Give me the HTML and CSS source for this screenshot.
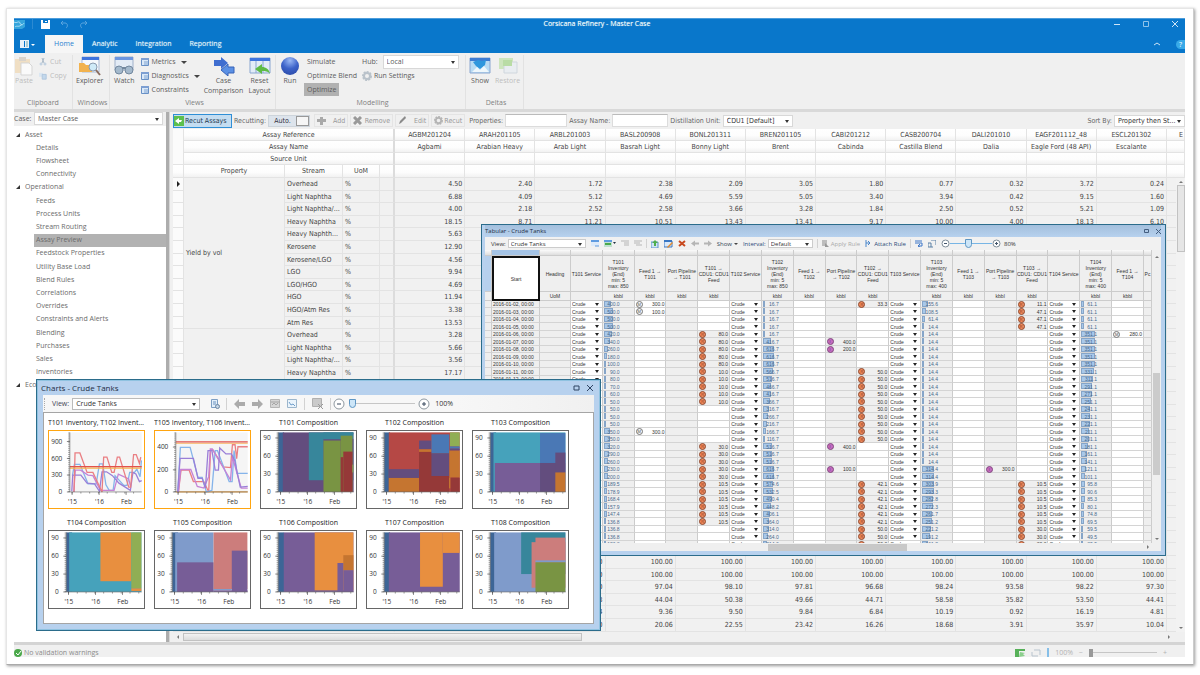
FILE: index.html
```html
<!DOCTYPE html>
<html lang="en">
<head>
<meta charset="utf-8">
<title>Corsicana Refinery - Master Case</title>
<link rel="stylesheet" href="styles.css">
</head>
<body>
<div class="frame">
<div class="app">

<header class="header">
  <div class="titlebar">
    <svg class="logo" width="12" height="9" viewBox="0 0 12 9"><path d="M0 0h11v7L8 9H0z" fill="#35a5dc"/><path d="M0 2c3 2 5-2 6 1s3 2 4 0M1 7c2-2 4 1 7-3" stroke="#a9def5" fill="none"/></svg>
    <span class="sep"></span>
    <button class="qbtn" aria-label="Save"><svg width="9" height="9" viewBox="0 0 9 9"><path d="M0 0h9v9H0z" fill="#fff"/><path d="M2 0h5v3H2z" fill="#0977cb"/><path d="M4 1h2v1H4z" fill="#fff"/></svg></button>
    <button class="qbtn" aria-label="Undo"><svg width="9" height="9" viewBox="0 0 9 9"><path d="M3 1 1 3l2 2M1 3h4c3 0 3 4 1 5" stroke="#5aa5df" fill="none"/></svg></button>
    <button class="qbtn" aria-label="Redo"><svg width="9" height="9" viewBox="0 0 9 9"><path d="m6 1 2 2-2 2M8 3H4C1 3 1 7 3 8" stroke="#5aa5df" fill="none"/></svg></button>
    <h1 class="title">Corsicana Refinery - Master Case</h1>
    <div class="wincontrols">
      <button class="qbtn" aria-label="Minimize"><svg width="8" height="8"><path d="M1 4.5h6" stroke="#cfe5f6"/></svg></button>
      <button class="qbtn" aria-label="Maximize"><svg width="8" height="8"><path d="M1.500 1.500h5v5h-5z" stroke="#8fc3ea" fill="none"/></svg></button>
      <button class="qbtn" aria-label="Close"><svg width="8" height="8"><path d="m1 1 6 6M7 1 1 7" stroke="#cfe5f6"/></svg></button>
    </div>
  </div>
  <nav class="tabs">
    <button class="filemenu" aria-label="File"><svg width="16" height="8" viewBox="0 0 16 8"><path d="M0 0h9v8H0z" fill="#e9f2fa"/><path d="M4.500 1v6" stroke="#0977cb"/><path d="M6 2h2M6 4h2M6 6h2" stroke="#7aa" /><path d="m11 4 2 2 2-2z" fill="#fff"/></svg></button>
    <button class="tab active">Home</button>
    <button class="tab">Analytic</button>
    <button class="tab">Integration</button>
    <button class="tab">Reporting</button>
    <div class="tabright">
      <svg width="8" height="6"><path d="m1 4 3-2 3 2" stroke="#cfe5f6" fill="none"/></svg>
      <button class="help">?</button>
    </div>
  </nav>
</header>

<section class="ribbon">
  <div class="group g-clip">
    <div class="gbody">
      <button class="big dim"><svg width="20" height="20" viewBox="0 0 20 20"><path d="M1 3h15v14H1z" fill="#f0dfc4"/><path d="M5 1h7v4H5z" fill="#d9d3cb"/><path d="M7 7h8l3 3v9H7z" fill="#fafafa" stroke="#d5d5d5"/></svg>Paste</button>
      <div class="stack">
        <button class="small dim"><svg width="8" height="8" viewBox="0 0 8 8"><path d="M3 0 5 5M5 0 3 5" stroke="#a9b8c6"/><circle cx="2" cy="6" r="1" fill="none" stroke="#b5c8dc"/><circle cx="6" cy="6" r="1" fill="none" stroke="#b5c8dc"/></svg>Cut</button>
        <button class="small dim"><svg width="8" height="8" viewBox="0 0 10 8"><path d="M0 0h5v5H0z" fill="#dbe7f2"/><path d="M4 2h5v6H4z" fill="#c3d8ec" stroke="#a8c2db"/></svg>Copy</button>
      </div>
    </div>
    <div class="glabel">Clipboard</div>
  </div>
  <div class="group g-win">
    <div class="gbody">
      <button class="big"><svg width="22" height="20" viewBox="0 0 22 20"><path d="M3 1h17v15H3z" fill="#f5f8fc" stroke="#a9b9d4"/><path d="M3 1h17v3H3z" fill="#3f74dd"/><path d="M0 7h5l2 2h6v7H0z" fill="#f2b24e"/><circle cx="14" cy="11" r="4" fill="#cfeaf8" stroke="#8b9bb0"/><path d="m17 14 4 5" stroke="#8b6d60" stroke-width="2"/></svg>Explorer</button>
    </div>
    <div class="glabel">Windows</div>
  </div>
  <div class="group g-views">
    <div class="gbody">
      <button class="big"><svg width="20" height="20" viewBox="0 0 20 20"><path d="M1 1h18v13H1z" fill="#e3ebf5" stroke="#9fb0c9"/><path d="M1 1h18v3H1z" fill="#6d96df"/><circle cx="5" cy="14" r="4" fill="#a4b9cc" stroke="#73889e"/><circle cx="15" cy="14" r="4" fill="#a4b9cc" stroke="#73889e"/><path d="M8 12h4" stroke="#73889e" stroke-width="2"/></svg>Watch</button>
      <div class="stack">
        <button class="small"><svg width="8" height="8" viewBox="0 0 8 8"><path d="M.500.500h7v7h-7z" fill="#dbe9f8" stroke="#6890c6"/><path d="M0 0h8v2H0z" fill="#7d9fd2"/><path d="M3 4h4M3 6h4" stroke="#7fa3d1"/></svg>Metrics <i class="caret"></i></button>
        <button class="small"><svg width="8" height="8" viewBox="0 0 8 8"><path d="M.500.500h7v7h-7z" fill="#dbe9f8" stroke="#6890c6"/><path d="M0 0h8v2H0z" fill="#7d9fd2"/><path d="M3 4h4M3 6h4" stroke="#7fa3d1"/></svg>Diagnostics <i class="caret"></i></button>
        <button class="small"><svg width="8" height="8" viewBox="0 0 8 8"><path d="M.500.500h7v7h-7z" fill="#dbe9f8" stroke="#6890c6"/><path d="M0 0h8v2H0z" fill="#7d9fd2"/><path d="M3 4h4M3 6h4" stroke="#7fa3d1"/></svg>Constraints</button>
      </div>
      <button class="big compare"><svg width="22" height="20" viewBox="0 0 22 20"><path d="M1 4h7V1l7 6-7 6v-3H1z" fill="#3f6ed0"/><path d="M21 11h-6V8l-7 6 7 6v-3h6z" fill="#5b90e4" stroke="#3763b8"/></svg>Case<br>Comparison</button>
      <button class="big"><svg width="22" height="20" viewBox="0 0 22 20"><path d="M1 2h20v15H1z" fill="#e2ecf8" stroke="#8aa6d0"/><path d="M1 2h20v3H1z" fill="#3f74dd"/><path d="M7 5v12M14 5v12" stroke="#8aa6d0"/><path d="m6 13 7-5v3c4 0 7 2 8 7-2-3-5-3-8-3v3z" fill="#5dbb46"/></svg>Reset<br>Layout</button>
    </div>
    <div class="glabel">Views</div>
  </div>
  <div class="group g-model">
    <div class="gbody">
      <button class="big"><svg width="20" height="20" viewBox="0 0 20 20"><defs><radialGradient id="ball" cx=".5" cy=".2" r=".9"><stop offset="0" stop-color="#9ab8f4"/><stop offset=".5" stop-color="#3d63c9"/><stop offset="1" stop-color="#2a48a4"/></radialGradient></defs><circle cx="10" cy="10" r="9" fill="url(#ball)"/></svg>Run</button>
      <div class="stack modes">
        <button class="small">Simulate</button>
        <button class="small">Optimize Blend</button>
        <button class="small pressed">Optimize</button>
      </div>
      <div class="stack hubs">
        <div class="small"><label for="hub">Hub:</label><span class="select hub"><select id="hub"><option>Local</option></select></span></div>
        <button class="small"><svg width="10" height="10" viewBox="0 0 10 10"><circle cx="5" cy="5" r="3" fill="none" stroke="#b9c2ca" stroke-width="2"/><circle cx="5" cy="5" r="4" fill="none" stroke="#b9c2ca" stroke-width="2" stroke-dasharray="2 1"/></svg>Run Settings</button>
      </div>
    </div>
    <div class="glabel">Modelling</div>
  </div>
  <div class="group g-delta">
    <div class="gbody">
      <button class="big"><svg width="22" height="20" viewBox="0 0 22 20"><path d="M1 2h20v15H1z" fill="#b9dcf4" stroke="#8aa6d0"/><path d="M1 2h20v3H1z" fill="#3e7cd2"/><path d="M4 6 9 4l4 1 4-1-1 5-5 4-4-3z" fill="#2f97dd"/><path d="m3 16 5-5 3 3 4-4 5 6z" fill="#eef7fc"/></svg>Show</button>
      <button class="big dim"><svg width="22" height="20" viewBox="0 0 22 20"><path d="M2 2h14v11H2z" fill="#cde5bd"/><path d="M7 6h13v11H7z" fill="#e9edf1" stroke="#cfd6dd"/><path d="M6 4h9v6H6z" fill="#b9dca5"/></svg>Restore</button>
    </div>
    <div class="glabel">Deltas</div>
  </div>
</section>

<div class="workspace">
  <aside class="sidebar">
    <div class="caserow"><label for="case">Case:</label><span class="select"><select id="case"><option>Master Case</option></select></span></div>
    <ul class="tree" id="tree"></ul>
  </aside>
  <div class="splitter"></div>
  <main class="main">
    <div class="toolbar">
      <button class="recut"><svg width="10" height="10" viewBox="0 0 10 10"><path d="M0 0h10v10H0z" fill="#5dc04e"/><path d="m1 5 4-3v2h3l-1 2H5v2z" fill="#fff"/></svg>Recut Assays</button>
      <span>Recutting:</span>
      <button class="auto">Auto.<i class="knob"></i></button>
      <button class="tbtn"><svg width="10" height="10" viewBox="0 0 10 10"><path d="M3 1h3v2h3v3H6v3H3V6H0V3h3z" fill="#a9a9a9"/></svg>Add</button>
      <button class="tbtn remove"><svg width="9" height="9" viewBox="0 0 9 9"><path d="m1 1 7 7M8 1 1 8" stroke="#999" stroke-width="3"/></svg>Remove</button>
      <button class="tbtn"><svg width="9" height="9" viewBox="0 0 9 9"><path d="m1 8 1-3 5-5 1 2-5 5z" fill="#8b8b8b"/></svg>Edit</button>
      <button class="tbtn"><svg width="9" height="9" viewBox="0 0 10 10"><circle cx="5" cy="5" r="3" fill="none" stroke="#b5b5b5" stroke-width="2"/><circle cx="5" cy="5" r="4" fill="none" stroke="#b5b5b5" stroke-width="2" stroke-dasharray="2 1"/></svg>Recut</button>
      <label for="props">Properties:</label><input class="props" id="props" type="text">
      <label for="aname">Assay Name:</label><input class="aname" id="aname" type="text">
      <label for="dist">Distillation Unit:</label><span class="select boxed dist"><select id="dist"><option>CDU1 [Default]</option></select></span>
      <label class="sortlabel" for="sort">Sort By:</label><span class="select boxed sort"><select id="sort"><option>Property then St...</option></select></span>
    </div>
    <div class="gridwrap">
      <table class="assays" id="assays"></table>
      <div class="vscroll"><i class="up"></i><i class="thumb"></i><i class="down"></i></div>
    </div>
    <div class="hscroll"><i class="left"></i><i class="thumb"></i><i class="right"></i></div>
  </main>
</div>

<footer class="status">
  <svg width="8" height="8" viewBox="0 0 8 8"><circle cx="4" cy="4" r="4" fill="#4aa84a"/><path d="m2 4 2 2 3-4" stroke="#fff" fill="none"/></svg>
  <span>No validation warnings</span>
  <div class="zoom">
    <svg width="10" height="8" viewBox="0 0 10 8"><path d="M0 0h10v2H4v6H0z" fill="#57b159"/><path d="m4 8 1-5 5 1-2 1 2 2z" fill="#8ccf8d"/></svg>
    <svg width="10" height="8" viewBox="0 0 10 8"><path d="M3 1h6v5M7 7H1V3" stroke="#b8c4ce" fill="none"/></svg>
    <i class="bar"></i><span>100%</span><span>−</span><input type="range" min="0" max="100" value="0" aria-label="Zoom"><span>+</span>
  </div>
</footer>

<section class="window tabular">
  <h2 class="wtitle">Tabular - Crude Tanks<span class="wbtns"><button aria-label="Maximize"><svg width="5" height="5"><path d="M.500.500h4v3h-4z" fill="none" stroke="#445e80"/></svg></button><button aria-label="Close"><svg width="5" height="5"><path d="m0 0 5 5M5 0 0 5" stroke="#445e80"/></svg></button></span></h2>
  <div class="wbar">
    <label for="tview">View:</label><span class="select boxed tview"><select id="tview"><option>Crude Tanks</option></select></span>
    <svg width="8" height="7" viewBox="0 0 8 7"><path d="M0 1h8v5H0z" fill="#dceafa"/><path d="M0 0h8v2H0z" fill="#5f9be0"/><path d="M4 6h4" stroke="#5f9be0"/></svg>
    <svg width="12" height="7" viewBox="0 0 12 7"><path d="M0 0h8v7H0z" fill="#bfe0d0"/><path d="M0 0h8v2H0z" fill="#5f9be0"/><path d="M1 4h6" stroke="#49a84c" stroke-width="2"/><path d="m9 2 3 0-1.500 2z" fill="#234"/></svg>
    <svg width="8" height="7" viewBox="0 0 8 7"><path d="M0 1h8M3 3h5M3 5h5" stroke="#b5b5b5"/></svg>
    <svg width="8" height="7" viewBox="0 0 8 7"><path d="M0 1h8M0 3h6M2 5h6" stroke="#b5b5b5"/></svg>
    <i class="vsep"></i>
    <svg width="8" height="8" viewBox="0 0 8 8"><path d="M0 2h7v6H0z" fill="#cfe3f6" stroke="#5d93cc"/><path d="m4 0 3 3H5v3H3V3H1z" fill="#4fae4d"/></svg>
    <svg width="9" height="8" viewBox="0 0 9 8"><path d="M0 1h8v6H0z" fill="#d9e8fa" stroke="#3876c4"/><path d="M0 0h8v2H0z" fill="#3876c4"/><path d="m3 7 5-5 1 1-5 5z" fill="#e28b2e"/></svg>
    <svg width="8" height="7" viewBox="0 0 8 7"><path d="m1 1 6 5M7 1 1 6" stroke="#c84a20" stroke-width="2"/></svg>
    <svg width="8" height="7" viewBox="0 0 8 7"><path d="m0 3.500 4-3v2h4v2H4v2z" fill="#b5b5b5"/></svg>
    <svg width="8" height="7" viewBox="0 0 8 7"><path d="m8 3.500-4-3v2H0v2h4v2z" fill="#b5b5b5"/></svg>
    <button class="link">Show <i class="caret"></i></button>
    <label class="navy" for="interval">Interval:</label><span class="select boxed tint"><select id="interval"><option>Default</option></select></span>
    <i class="vsep"></i>
    <button class="link dim"><svg width="7" height="7" viewBox="0 0 7 7"><path d="M0 0h5v6H0z" fill="#bdbdbd"/><path d="m3 3 4 4H3z" fill="#999"/></svg>Apply Rule</button>
    <button class="link navy"><svg width="7" height="7" viewBox="0 0 7 7"><path d="M1 0v7M1 3h4M3 1l2 2-2 2" stroke="#4b87cb" fill="none"/></svg>Attach Rule</button>
    <i class="vsep"></i>
    <svg width="8" height="7" viewBox="0 0 8 7"><path d="M0 1h7M0 3h7v3H3m2-2L3 6l2 1" stroke="#3c76c8" fill="none"/></svg>
    <svg width="8" height="8" viewBox="0 0 8 8"><path d="M3 0h5v5M5 7H0V3h3v4" stroke="#5b80a5" fill="none"/></svg>
    <span class="zslider"><svg width="9" height="9" viewBox="0 0 9 9"><circle cx="4.500" cy="4.500" r="3.500" fill="#fff" stroke="#7e8c98"/><path d="M3 4.500h3" stroke="#44566b"/></svg><input type="range" min="0" max="100" value="42" aria-label="Table zoom"><svg width="9" height="9" viewBox="0 0 9 9"><circle cx="4.500" cy="4.500" r="3.500" fill="#fff" stroke="#7e8c98"/><path d="M3 4.500h3M4.500 3v3" stroke="#44566b"/></svg><span>80%</span></span>
  </div>
  <div class="tbody">
    <div class="tclip"><table class="tanks" id="tanks"></table></div>
    <div class="tvscroll"><i class="up"></i><i class="thumb"></i><i class="down"></i></div>
    <div class="thscroll"><i class="thumb"></i><i class="right"></i></div>
  </div>
</section>

<section class="window charts">
  <h2 class="wtitle">Charts - Crude Tanks<span class="wbtns"><button aria-label="Maximize"><svg width="7" height="6"><path d="M1 1h5v4H1z" fill="none" stroke="#2f4463"/></svg></button><button aria-label="Close"><svg width="6" height="6"><path d="m0 0 6 6M6 0 0 6" stroke="#2f4463"/></svg></button></span></h2>
  <div class="wbar">
    <i class="grip"></i>
    <label for="cview">View:</label><span class="select boxed cview"><select id="cview"><option>Crude Tanks</option></select></span>
    <svg width="10" height="10" viewBox="0 0 10 10"><path d="M1.500.500h6v8h-6z" fill="#e3effa" stroke="#7d9fc4"/><path d="M3 3h3M3 5h3" stroke="#6b92bf"/><circle cx="7.500" cy="7.500" r="2" fill="#c5d6e6" stroke="#6c86a2"/></svg>
    <i class="vsep"></i>
    <svg width="12" height="10" viewBox="0 0 12 10"><path d="m0 5 5-5v3h6v4H5v3z" fill="#ababab"/></svg>
    <svg width="12" height="10" viewBox="0 0 12 10"><path d="m11 5-5-5v3H0v4h6v3z" fill="#ababab"/></svg>
    <svg width="11" height="10" viewBox="0 0 11 10"><path d="M.500.500h9v8h-9z" fill="#d5d5d5" stroke="#b5b5b5"/><path d="M1 3h9M2 6l2-2 2 2 2-2" stroke="#a5a5a5" fill="none"/></svg>
    <svg width="11" height="10" viewBox="0 0 11 10"><path d="M.500.500h9v8h-9z" fill="#eaf4fc" stroke="#9cb6cc"/><path d="m2 3 2 3 2-1 2 2" stroke="#6f9dca" fill="none"/></svg>
    <i class="vsep"></i>
    <svg width="12" height="11" viewBox="0 0 12 11"><path d="M.500.500h9v8h-9z" fill="#cacaca" stroke="#b0b0b0"/><path d="m6 6 5 5M11 6l-5 5" stroke="#999"/></svg>
    <i class="vsep"></i>
    <span class="zslider"><svg width="12" height="12" viewBox="0 0 12 12"><circle cx="6" cy="6" r="5" fill="#fff" stroke="#8d979f"/><path d="M4 6h4" stroke="#39495c"/></svg><input type="range" min="0" max="100" value="0" aria-label="Chart zoom"><svg width="12" height="12" viewBox="0 0 12 12"><circle cx="6" cy="6" r="5" fill="#fff" stroke="#8d979f"/><path d="M4 6h4M6 4v4" stroke="#39495c"/></svg><span>100%</span></span>
  </div>
  <div class="chartgrid" id="chartgrid"></div>
</section>

</div>
</div>
<script src="script.js"></script>
</body>
</html>
```
FILE: styles.css
```css
* { box-sizing: border-box; }
body { margin: 0; background: #fff; font: 7px/10px "Open Sans", "Noto Sans", sans-serif; color: #5c5c5c; overflow: hidden; }
button, input, select { font: inherit; color: inherit; margin: 0; padding: 0; border: 0; background: none; }
button { white-space: nowrap; }
svg { display: block; flex: none; }
h1, h2, ul { margin: 0; padding: 0; font-weight: normal; list-style: none; }
i { display: block; flex: none; }

.frame { height: calc(100vh - 18px); margin: 8px 6px 10px; padding: 9px 8px 7px 7px; border: 1px solid #e6e6e6; border-bottom-color: #aaa; border-right-color: #ccc; box-shadow: 1px 1px 3px #999; }
.app { position: relative; height: 100%; display: flex; flex-direction: column; background: #f0f0f0; }

.header { background: #0977cb; color: #fff; border-top: 1px solid #4d9ddb; }
.titlebar { position: relative; display: flex; align-items: center; height: 10px; }
.logo { margin-right: 6px; }
.sep { width: 1px; height: 10px; background: #2c8ad2; margin-right: 8px; }
.titlebar > .qbtn { margin-right: 10px; }
.title { position: absolute; left: 50%; top: 0; margin-left: -56px; font-size: 7px; line-height: 10px; text-shadow: 0 0 1px #9cd; white-space: nowrap; }
.wincontrols { margin-left: auto; display: flex; gap: 21px; padding-right: 6px; }
.tabs { display: flex; height: 24px; align-items: flex-end; }
.filemenu { width: 31px; height: 18px; padding-left: 6px; }
.tab { height: 18px; padding: 0 9px; color: #e6f2fb; text-shadow: 0 0 1px #9cd; }
.tab.active { width: 38px; background: #f6f6f6; color: #1f7fd0; text-shadow: none; }
.tabright { margin-left: auto; display: flex; align-items: center; gap: 15px; height: 18px; }
.help { width: 9px; height: 9px; border-radius: 5px 0 0 5px; background: #38a9e8; line-height: 9px; }

.ribbon { display: flex; height: 59px; background: #f0f0f0; border-bottom: 3px solid #d9d9d9; }
.group { display: flex; flex-direction: column; border-right: 1px solid #e2e2e2; margin: 2px 0 0; }
.gbody { display: flex; flex: 1; align-items: flex-start; }
.glabel { text-align: center; height: 11px; color: #808080; }
.big { display: flex; flex-direction: column; align-items: center; line-height: 10px; text-align: center; padding-top: 1px; }
.dim { color: #bdbdbd; }
.small { display: flex; align-items: center; height: 14px; gap: 3px; }
.stack { display: flex; flex-direction: column; align-items: flex-start; }
.caret { border: 3px solid transparent; border-top-color: #444; border-bottom: 0; margin-left: 2px; }
.g-clip { width: 59px; }
.g-clip .stack { margin-left: 5px; }
.g-win { width: 37px; padding-left: 3px; }
.g-views { width: 166px; padding-left: 4px; }
.g-views .stack { margin-left: 6px; width: 62px; }
.compare { width: 42px; margin-right: 4px; }
.g-model { width: 190px; padding-left: 4px; }
.g-delta { width: 58px; padding-left: 3px; }
.g-delta .gbody { gap: 4px; }
.modes { width: 58px; margin-left: 4px; }
.modes .small { padding: 0 3px; }
.modes .pressed { background: #b1b1b1; height: 13px; }
.hubs .small { gap: 2px; }

.select { position: relative; display: block; background: #fff; border: 1px solid #d8d8d8; }
.select select { display: block; appearance: none; width: 100%; height: 100%; padding: 0 3px; outline: 0; }
.select::after { content: ""; position: absolute; right: 3px; top: calc(50% - 1px); border: 2px solid transparent; border-top: 3px solid #333; border-bottom: 0; }
.hub { width: 76px; height: 14px; margin-left: 3px; }

.workspace { flex: 1; min-height: 0; display: flex; }
.sidebar { width: 152px; background: #fff; flex: none; }
.caserow { display: flex; background: #f0f0f0; height: 14px; padding-right: 3px; }
.caserow label { width: 20px; line-height: 13px; }
.caserow .select { flex: 1; height: 13px; }
.tree { height: 264px; display: grid; grid-auto-rows: 1fr; margin-top: 2px; align-items: stretch; color: #6b6b6b; }
.tree li { display: flex; align-items: center; margin-left: 20px; padding-left: 2px; }
.tree li.parent { margin-left: 2px; padding: 0; gap: 5px; }
.tree li.parent i { border: 4px solid transparent; border-width: 0 0 4px 4px; border-bottom-color: #333; }
.tree li.selected { background: #b2b2b2; }
.splitter { width: 4px; background: #adadad; border-right: 1px solid #d6d6d6; flex: none; }
.main { flex: 1; min-width: 0; padding-left: 3px; display: flex; flex-direction: column; }

.toolbar { display: flex; align-items: center; height: 17px; font-family: "DejaVu Sans Condensed", "DejaVu Sans", sans-serif; font-size: 7px; color: #666; }
.toolbar > * { flex: none; }
.toolbar label { margin-left: 2px; }
.toolbar input { height: 13px; background: #fff; border: 1px solid #dcdcdc; border-top-color: #bbb; }
.recut { display: flex; align-items: center; gap: 1px; height: 14px; width: 59px; border: 1px solid #2f8fd6; background: #c4ddf1; color: #22384f; margin-right: 2px; overflow: hidden; }
.auto { display: flex; align-items: center; justify-content: space-between; width: 42px; height: 12px; background: #dde4ec; border: 1px solid #cdd4db; padding-left: 5px; color: #334; margin: 0 4px 0 2px; }
.knob { width: 13px; height: 10px; border: 1px solid #999; background: #f6f6f6; }
.tbtn { display: flex; align-items: center; justify-content: space-between; height: 13px; width: 34px; padding: 0 2px; border: 1px solid #e4e4e4; color: #999; margin-right: 2px; }
.remove { width: 43px; }
.props { width: 62px; margin-left: 2px; }
.aname { width: 56px; margin-left: 2px; }
.boxed select { border: 0; }
.dist { width: 70px; height: 12px; margin-left: 2px; color: #333; }
.toolbar .sortlabel { margin-left: auto; }
.sort { width: 71px; height: 12px; margin-left: 2px; color: #333; }

.gridwrap { position: relative; flex: 1; min-height: 0; overflow: hidden; }
.assays { width: 100%; table-layout: fixed; border-collapse: separate; border-spacing: 0; font: 7px/10px "DejaVu Sans Condensed", "DejaVu Sans", sans-serif; color: #444; }
.assays th, .assays td { padding: 0 2px; border: 1px solid #e3e3e3; border-width: 0 1px 1px 0; font-weight: normal; white-space: nowrap; overflow: hidden; }
.assays th { text-align: center; background: linear-gradient(#fff, #fdfdfd 60%, #f2f2f2); }
.assays .rh { background: #fbfbfb; }
.assays thead tr { height: 12px; }
.assays thead tr:last-child { height: 13px; }
.assays tbody tr { height: 13px; }
.assays tbody tr:nth-child(5n+2), .assays tbody tr:nth-child(5n+4) { height: 12px; }
.assays tbody { background: #f1f1f1; }
.assays td.n { text-align: right; }
.assays .edge { border-right: 2px solid #dcdcdc; }
.assays .c-rh { width: 11px; } .assays .c-prop { width: 101px; } .assays .c-stream { width: 58px; } .assays .c-uom { width: 37px; } .assays .c-gap { width: 15px; } .assays .c-last { width: 18px; }
.current { border: 3px solid transparent; border-left-color: #222; border-right: 0; margin-left: 2px; }
.vscroll { position: absolute; right: 0; top: 49px; bottom: 0; width: 9px; background: #f2f2f2; display: flex; flex-direction: column; align-items: center; padding: 3px 0; }
.vscroll .thumb { width: 8px; height: 67px; margin-top: 2px; border: 1px solid #c2c2c2; background: #e6e6e6; }
.up { border: 2px solid transparent; border-bottom: 2px solid #777; border-top: 0; }
.down { border: 2px solid transparent; border-top: 2px solid #777; border-bottom: 0; margin-top: auto; }
.left { border: 2px solid transparent; border-right: 2px solid #777; border-left: 0; }
.right { border: 2px solid transparent; border-left: 2px solid #777; border-right: 0; margin-left: auto; }
.hscroll { display: flex; align-items: center; height: 10px; padding: 0 15px 0 4px; }
.hscroll .thumb { width: 399px; height: 8px; margin-left: 4px; border: 1px solid #c2c2c2; background: linear-gradient(#f2f2f2, #dcdcdc); }

.status { display: flex; align-items: center; height: 15px; padding-top: 3px; border-top: 3px solid #d4d4d4; gap: 2px; color: #8c8c8c; overflow: hidden; }
.zoom { margin-left: auto; display: flex; align-items: center; gap: 6px; padding-right: 18px; color: #b3b3b3; }
.zoom .bar { width: 2px; height: 9px; background: #86bfe8; }

input[type="range"] { appearance: none; height: 10px; width: 68px; background: linear-gradient(#c6c6c6, #c6c6c6) center / 100% 1px no-repeat; }
input[type="range"]::-webkit-slider-thumb { appearance: none; width: 4px; height: 8px; background: #999; }

.window { position: absolute; display: flex; flex-direction: column; background: #b7d1ee; border: 1px solid #2b6c8b; color: #333; }
.wtitle { color: #1d2d44; display: flex; justify-content: space-between; background: linear-gradient(#a3bfdd, #b7d1ee); }
.wbtns { display: flex; align-items: center; gap: 7px; }
.wbar { display: flex; align-items: center; background: #f1f1f1; }
.vsep { width: 1px; height: 12px; background: #d2d2d2; }
.link { display: flex; align-items: center; gap: 2px; color: #345; }
.link.dim { color: #aaa; }
.navy { color: #2c4a78; }
.zslider { display: flex; align-items: center; }

.tabular { left: 467px; top: 206px; width: 685px; height: 332px; padding: 0 4px 4px 3px; font-size: 6px; }
.tabular .wtitle { font-size: 6px; line-height: 12px; }
.tabular .wbar { height: 13px; font-size: 6px; padding-left: 6px; gap: 5px; line-height: 8px; }
.tabular .select select { padding: 0 2px; }
.tabular .caret { border-width: 2px 2px 0; margin: 0; }
.tview { width: 78px; height: 9px; }
.tint { width: 45px; height: 9px; }
.tabular .boxed { border-color: #ccc; margin-left: -3px; }
.tabular .vsep { height: 9px; margin: 0 -1px; }
.tabular input[type="range"] { width: 42px; background-image: linear-gradient(#77b5e5, #77b5e5); }
.tabular input[type="range"]::-webkit-slider-thumb, .charts input[type="range"]::-webkit-slider-thumb { width: 7px; height: 9px; background: #cde6f8; border: 1px solid #5f97c4; border-radius: 0 0 4px 4px; }
.tabular .zslider span { margin-left: 3px; }
.tbody { flex: 1; min-height: 0; display: grid; grid-template: 1fr 8px / 1fr 9px; background: #f0f0f0; }
.tclip { overflow: hidden; min-width: 0; min-height: 0; }
.tanks { width: 100%; table-layout: fixed; border-collapse: separate; border-spacing: 0; font: 5px/6px "Liberation Sans", Arial, sans-serif; color: #333; }
.tanks th, .tanks td { padding: 0 1px; border: 1px solid #ccc; border-width: 0 1px 1px 0; font-weight: normal; background: #efefef; overflow: hidden; white-space: nowrap; }
.tanks .band th { height: 6px; background: linear-gradient(#fbfbfb, #dedede); }
.tanks th { padding: 0; }
.tanks .names th { height: 36px; }
.tanks .names th:first-child { background: #b6d0ed; }
.tanks .units th { height: 9px; }
.tanks .start { background: #fff; border: 1px solid #111; outline: 1px solid #111; outline-offset: -2px; }
.tanks .band th.cur { background: #a5c4e6; }
.tanks tbody tr { height: 7px; }
.tanks tbody tr:nth-child(2n) { height: 8px; }
.tanks tbody td { border-bottom-color: #d4d4d4; }
.tanks td.w { background: #fff; }
.tanks .flow, .tanks .svc, .tanks .inv { position: relative; }
.tanks td.flow { overflow: visible; }
.cell { display: flex; align-items: center; height: 6px; }
.flow .cell { justify-content: space-between; }
.dot { width: 7px; height: 7px; border: 1px solid #8d4b33; border-radius: 50%; background: #f08a5c; color: #8d3b20; font-size: 4px; line-height: 5px; text-align: center; font-style: normal; }
.dot.p { background: #c56cc0; border-color: #824a80; color: #6a2d68; }
.dot.g { background: #f3f3f3; border-color: #777; color: #555; }
.svc select { appearance: none; width: 100%; height: 6px; line-height: 6px; display: block; padding: 0; }
.svc::after { content: ""; position: absolute; right: 3px; top: 2px; border: 2px solid transparent; border-top: 3px solid #222; border-bottom: 0; }
.level { height: 6px; background: #a8c8ea; border: 1px solid #86a5c8; min-width: 1px; position: absolute; left: 1px; top: 0; }
.inv .cell { position: relative; justify-content: flex-end; padding-right: 13px; color: #48688c; }
.tanks .c-rh { width: 7px; } .tanks .c-start { width: 48px; } .tanks .c-head { width: 31px; } .tanks .c-last { width: 8px; }
.tvscroll { display: flex; flex-direction: column; align-items: center; padding: 6px 0 3px; background: #efefef; }
.tvscroll .thumb { width: 7px; height: 102px; margin-top: 115px; background: #cbcbcb; }
.thscroll { grid-column: 1 / 3; display: flex; align-items: center; background: #efefef; padding-right: 12px; }
.thscroll .thumb { width: 139px; height: 7px; margin-left: 283px; background: #c8c8c8; }

.charts { left: 22px; top: 361px; width: 565px; height: 252px; padding: 0 6px 6px; box-shadow: inset 0 0 0 1px #8fc2e0; }
.charts .wtitle { font-size: 8px; line-height: 15px; background: none; padding-right: 1px; margin-left: -2px; }
.charts .wbar { height: 17px; gap: 7px; padding-left: 1px; background: linear-gradient(90deg, #f7f7f7 75%, #f0f0f0); }
.grip { width: 1px; height: 12px; border-left: 1px dotted #aaa; }
.charts .wbar label { margin-right: -4px; color: #445; }
.cview { width: 128px; height: 12px; margin-right: 3px; }
.charts .boxed { border-color: #bbb; }
.charts .wbar svg { margin-right: -1px; }
.charts .zslider { margin-left: -5px; }
.charts .zslider svg { margin: 0; }
.charts input[type="range"] { width: 66px; margin: 0 3px 0 4px; }
.charts .zslider span { margin-left: 5px; }
.chartgrid { flex: 1; display: grid; grid-template-columns: repeat(5, 97px); grid-auto-rows: 100px; column-gap: 9px; align-content: start; background: #fff; border: 1px solid #a5a5a5; padding: 3px 4px; }
.chart { margin: 0; min-width: 0; }
.chart figcaption { text-align: center; white-space: nowrap; overflow: hidden; text-overflow: ellipsis; height: 14px; line-height: 13px; color: #222; }
.chart svg { width: 97px; height: 79px; background: #fff; border: 1px solid #666; }
.chart.alert svg { border: 1px solid #ffa510; }
.chart text { font-size: 20px; fill: #333; }
```
FILE: script.js
```js
const el = (id) => document.getElementById(id);

// Navigation tree
const tree = ["*Asset", "Details", "Flowsheet", "Connectivity", "*Operational", "Feeds", "Process Units", "Stream Routing",
  "Assay Preview", "Feedstock Properties", "Utility Base Load", "Blend Rules", "Correlations", "Overrides",
  "Constraints and Alerts", "Blending", "Purchases", "Sales", "Inventories", "*Economics"];
el("tree").innerHTML = tree.map((t) => t[0] === "*"
  ? `<li class="parent"><i></i>${t.slice(1)}</li>`
  : `<li class="${t === "Assay Preview" ? "selected" : ""}">${t}</li>`).join("");

// Assay grid
const refs = ["AGBM201204", "ARAH201105", "ARBL201003", "BASL200908", "BONL201311", "BREN201105", "CABI201212", "CASB200704", "DALI201010", "EAGF201112_48", "ESCL201302"];
const names = ["Agbami", "Arabian Heavy", "Arab Light", "Basrah Light", "Bonny Light", "Brent", "Cabinda", "Castilla Blend", "Dalia", "Eagle Ford (48 API)", "Escalante"];
const streams = ["Overhead", "Light Naphtha", "Light Naphtha/...", "Heavy Naphtha", "Heavy Naphth...", "Kerosene", "Kerosene/LGO", "LGO", "LGO/HGO", "HGO", "HGO/Atm Res", "Atm Res"];
const values = {
  0: "4.50 2.40 1.72 2.38 2.09 3.05 1.80 0.77 0.32 3.72 0.24",
  1: "6.88 4.09 5.12 4.69 5.59 5.05 3.40 3.94 0.42 9.15 1.60",
  2: "4.00 2.18 2.52 2.58 3.66 3.28 1.84 2.50 0.52 5.21 1.09",
  3: "18.15 8.71 11.21 10.51 13.43 13.41 9.17 10.00 4.00 18.13 6.10",
  4: "5.63", 5: "12.90", 6: "4.56", 7: "9.94", 8: "4.69", 9: "11.94", 10: "3.38", 11: "13.53", 12: "3.28", 13: "5.66", 14: "3.56", 15: "17.17",
  30: "100.00 100.00 100.00 100.00 100.00 100.00 100.00 100.00 100.00 100.00 100.00",
  31: "100.00 100.00 100.00 100.00 100.00 100.00 100.00 100.00 100.00 100.00 100.00",
  32: "97.10 97.30 97.20 97.04 98.10 97.81 96.68 98.24 93.58 98.22 97.30",
  33: "53.21 41.12 47.63 44.04 50.38 49.66 44.71 58.58 35.82 53.50 44.41",
  34: "9.12 9.22 9.04 9.36 9.50 9.84 6.84 10.19 0.92 16.19 4.81",
  35: "25.41 18.32 20.80 20.06 22.55 23.42 16.26 18.68 3.91 35.97 10.04"
};
let h = '<colgroup><col class="c-rh"><col class="c-prop"><col class="c-stream"><col class="c-uom"><col class="c-gap">' +
  refs.map(() => "<col>").join("") + '<col class="c-last"></colgroup><thead>';
h += `<tr><th rowspan="3" class="rh"></th><th colspan="4" class="edge">Assay Reference</th>${refs.map((r) => `<th>${r}</th>`).join("")}<th>&nbsp;&nbsp;&nbsp;&nbsp;&nbsp;E</th></tr>`;
h += `<tr><th colspan="4" class="edge">Assay Name</th>${names.map((r) => `<th>${r}</th>`).join("")}<th></th></tr>`;
h += `<tr><th colspan="4" class="edge">Source Unit</th>${refs.map(() => "<th></th>").join("")}<th></th></tr>`;
h += `<tr><th></th><th>Property</th><th>Stream</th><th>UoM</th><th class="edge"></th>${refs.map(() => "<th></th>").join("")}<th></th></tr></thead><tbody>`;
for (let r = 0; r < 36; r++) {
  const v = (values[r] || "").split(" ");
  h += `<tr><td class="rh">${r === 0 ? '<i class="current"></i>' : ""}</td>`;
  if (r === 0) h += '<td rowspan="12">Yield by vol</td>';
  if (r === 12) h += '<td rowspan="24"></td>';
  h += `<td>${streams[r % 12]}</td><td>%</td><td class="edge"></td>`;
  h += refs.map((_, c) => `<td class="n">${v[c] || ""}</td>`).join("") + "<td></td></tr>";
}
el("assays").innerHTML = h + "</tbody>";

// Tank schedule
const rep = (v, n) => Array(n).fill(v);
const span = (...parts) => { const o = {}; parts.forEach(([a, b, v]) => { for (let i = a; i <= b; i++) o[i] = v; }); return o; };
const tanks = [
  { id: "T101", max: 850,
    inv: [400, 500, 500, 500, 420, 340, 260, 180, 100, 90, 80, 70, 60, 50, 50, 50, 50, 350, 350, 320, 290, 260, 230, 200, 189.5, 178.9, 168.4, 157.9, 147.4, 136.8, 136.8, 136.8, 126.3],
    feed: span([0, 0, 300], [1, 1, 100], [17, 17, 300]), port: {},
    out: span([4, 8, 80], [9, 13, 10], [19, 23, 30], [24, 29, 10.5]) },
  { id: "T102", max: 850,
    inv: [...rep(16.7, 5), 416.7, 616.7, 616.7, 616.7, 566.7, 516.7, 466.7, 416.7, 366.7, 316.7, 266.7, 216.7, 166.7, 116.7, 516.7, 516.7, 516.7, 616.7, 616.7, 574.6, 532.5, 490.4, 448.2, 406.1, 364, 314, 264, 214],
    feed: {}, port: span([5, 5, 400], [6, 6, 200], [19, 19, 400], [22, 22, 100]),
    out: span([0, 0, 33.3], [9, 18, 50], [24, 29, 42.1], [30, 32, 50]) },
  { id: "T103", max: 400,
    inv: [155.6, 108.5, 61.4, ...rep(14.4, 19), 314.4, 314.4, 303.9, 293.3, 282.8, 272.3, 261.7, 251.2, 221.2, 191.2, 161.2],
    feed: {}, port: span([22, 22, 300]),
    out: span([0, 0, 11.1], [1, 3, 47.1], [24, 29, 10.5], [30, 32, 30]) },
  { id: "T104", max: 400,
    inv: [...rep(61.1, 4), ...rep(351.1, 5), 331.1, 311.1, 291.1, 271.1, 251.1, 241.1, 231.1, 221.1, 211.1, 201.1, 181.1, 161.1, 141.1, 121.1, 101.1, 95.8, 90.6, 85.3, 80.1, 74.8, 69.5, 59.5, 49.5, 39.5],
    feed: span([4, 4, 280]) }
];
const flow = (map, r, kind, letter, white) => {
  const v = map[r];
  const bg = white && (kind !== "o" || v === undefined) ? " w" : "";
  return `<td class="flow${bg}">${v === undefined ? "" : `<div class="cell"><i class="dot ${kind}">${letter}</i><span>${v.toFixed(1)}</span></div>`}</td>`;
};
let t = '<colgroup><col class="c-rh"><col class="c-start"><col class="c-head">' + "<col>".repeat(18) + '<col class="c-last"></colgroup><thead>';
t += '<tr class="band"><th></th><th class="cur"></th>' + "<th></th>".repeat(20) + "</tr>";
t += '<tr class="names"><th></th><th rowspan="2" class="start">Start</th><th>Heading</th>';
let u = '<tr class="units"><th></th><th>UoM</th>';
tanks.forEach((k) => {
  t += `<th>${k.id} Service</th><th>${k.id}<br>Inventory<br>(End)<br>min: 5<br>max: ${k.max}</th><th>Feed 1 →<br>${k.id}</th>`;
  u += "<th></th><th>kbbl</th><th>kbbl</th>";
  if (k.out) {
    t += `<th>Port Pipeline<br>→ ${k.id}</th><th>${k.id} →<br>CDU1: CDU1<br>Feed</th>`;
    u += "<th>kbbl</th><th>kbbl</th>";
  }
});
t += "<th>Pc</th></tr>" + u + "<th></th></tr></thead><tbody>";
for (let r = 0; r < 33; r++) {
  const day = new Date(Date.UTC(2016, 0, 2 + r)).toISOString().slice(0, 10);
  t += `<tr><td></td><td>${day}, 00:00</td><td></td>`;
  tanks.forEach((k) => {
    const v = k.inv[r];
    t += `<td class="svc w"><select aria-label="${k.id} service"><option>Crude</option></select></td>`;
    t += `<td class="inv"><i class="level" style="width:${Math.round(v / k.max * 50)}%"></i><div class="cell">${v.toFixed(1)}</div></td>`;
    t += flow(k.feed, r, "g", "M", true);
    if (k.out) t += flow(k.port, r, "p", "I", false) + flow(k.out, r, "o", "R", true);
  });
  t += "<td></td></tr>";
}
el("tanks").innerHTML = t + "</tbody>";

// Charts: each shape is [colour, x1, y1, x2, y2]
const C = { navy: "#3d6596", plum: "#634d7e", purple: "#775d97", teal: "#37869b", aqua: "#46a2bb", green: "#799443", lime: "#90ae54",
  maroon: "#953938", red: "#b54845", rust: "#c57530", orange: "#e88f3f", blue: "#4a78b5", sky: "#7f9bcb", pink: "#cc7d7c" };
const lines = (list) => list.map(([c, p]) => `<polyline points="${p}" fill="none" stroke="${c}" stroke-width="4"/>`).join("");
const charts = [
  { title: "T101 Inventory, T102 Inventory", ticks: [[32, 900], [84, 600], [135, 300], [187, 0]], body: lines([
    ["#85b4ea", "72,137 78,102 95,102 120,162 145,162 155,101 165,101 175,165 185,182 197,182 203,137 230,167 240,167 248,127 263,127 270,117 280,140 284,90"],
    ["#c583d6", "76,187 81,120 97,120 120,135 135,137 158,182 200,182 213,132 245,147 250,168"],
    ["#9a7fd8", "70,185 73,135 98,135 117,160 140,162 155,185 163,125 177,125 195,137 215,160 250,182 258,127 267,132 278,155 285,152"],
    ["#ea7f83", "77,187 80,67 95,67 117,127 135,127 163,187 168,80 178,80 193,127 200,127 210,80 217,80 245,172 251,172 260,72 268,72 278,99 282,80"],
    ["#f5b34e", "64,114 285,114"], ["#e2524c", "64,109 285,109"]]) },
  { title: "T105 Inventory, T106 Inventory", ticks: [[49, 400], [119, 200], [187, 0]], body: lines([
    ["#f5a94a", "64,187 285,187"],
    ["#ea7f83", "72,187 80,120 105,120 118,155 150,155 165,187 171,58 178,58 210,110 232,112 238,42 246,42 251,85 255,48 285,48"],
    ["#85b4ea", "70,187 78,50 108,50 132,142 145,142 158,187 175,182 185,60 192,60 228,155 237,155 243,60 252,130 285,130"],
    ["#c583d6", "72,187 79,118 110,118 130,170 150,175 165,140 170,55 176,55 232,150 238,80 265,175 285,175"],
    ["#9a7fd8", "70,187 77,84 118,84 132,145 145,145 155,175 163,60 175,60 185,120 195,120 199,52 218,70 235,70 245,90 262,172 285,170"],
    ["#f8c586", "64,38 285,38"], ["#e2524c", "64,33 285,33"]]) },
  { title: "T101 Composition", body: [["plum", 67, 4, 284, 187], ["teal", 147, 4, 284, 151], ["plum", 192, 24, 284, 187], ["teal", 192, 4, 245, 25], ["green", 192, 29, 245, 187], ["teal", 245, 4, 284, 10], ["green", 245, 14, 281, 187], ["maroon", 245, 80, 253, 187], ["maroon", 253, 63, 281, 187], ["lime", 281, 103, 284, 127]] },
  { title: "T102 Composition", body: [["red", 67, 4, 285, 187], ["plum", 67, 117, 160, 144], ["rust", 67, 144, 160, 187], ["plum", 160, 29, 198, 56], ["rust", 160, 56, 198, 64], ["maroon", 160, 64, 253, 187], ["blue", 198, 10, 253, 69], ["plum", 198, 69, 253, 138], ["lime", 255, 4, 285, 47], ["blue", 255, 47, 285, 54], ["plum", 255, 54, 285, 60], ["rust", 253, 60, 285, 143], ["rust", 252, 143, 257, 176], ["maroon", 257, 143, 285, 187]] },
  { title: "T103 Composition", body: [["aqua", 63, 4, 284, 187], ["purple", 67, 98, 206, 187], ["blue", 206, 6, 284, 98], ["plum", 206, 98, 284, 187], ["plum", 253, 66, 284, 127], ["rust", 253, 127, 284, 187]] },
  { title: "T104 Composition", body: [["aqua", 62, 4, 284, 187], ["orange", 158, 4, 253, 154], ["lime", 253, 4, 284, 176], ["orange", 253, 176, 284, 184]] },
  { title: "T105 Composition", body: [["sky", 62, 4, 180, 187], ["purple", 68, 96, 180, 187], ["pink", 180, 4, 284, 178], ["sky", 180, 178, 236, 182], ["purple", 180, 182, 284, 187], ["purple", 236, 60, 284, 187]] },
  { title: "T106 Composition", body: [["purple", 70, 4, 284, 187], ["orange", 165, 4, 284, 182], ["rust", 253, 74, 284, 120], ["purple", 235, 98, 253, 187], ["purple", 253, 120, 284, 187]] },
  { title: "T107 Composition", body: [["purple", 67, 4, 285, 187], ["orange", 163, 4, 233, 171], ["orange", 233, 4, 285, 67]] },
  { title: "T108 Composition", body: [["sky", 65, 4, 284, 187], ["teal", 148, 4, 284, 132], ["pink", 180, 34, 284, 174], ["pink", 192, 20, 284, 90], ["sky", 180, 175, 192, 187], ["sky", 192, 90, 284, 96], ["green", 192, 96, 284, 187]] }
];
el("chartgrid").innerHTML = charts.map((c) => {
  const line = typeof c.body === "string";
  const ax = line ? 64 : 53;
  let s = line ? '<rect x="64" y="4" width="221" height="183" fill="#f5f5f5"/>' + c.body
    : `<rect x="53" y="4" width="18" height="183" fill="${C.navy}"/>` + c.body.map(([f, x1, y1, x2, y2]) => `<rect x="${x1}" y="${y1}" width="${x2 - x1}" height="${y2 - y1}" fill="${C[f]}"/>`).join("");
  let minor = "";
  for (let y = 6; y < 187; y += 6) minor += `M${ax - 5} ${y}h5`;
  for (let x = ax + 7; x < 284; x += 27) minor += `M${x} 187v5`;
  s += `<path d="${minor}M${ax} 4V187H285" stroke="#666" stroke-width="2" fill="none"/>`;
  (c.ticks || [[21, 90], [77, 60], [132, 30], [187, 0]]).forEach(([y, v]) => {
    s += `<path d="M${ax - 9} ${y}h9" stroke="#444" stroke-width="2"/><text x="${line ? 41 : 30}" y="${y + 7}" text-anchor="end">${v}</text>`;
  });
  [[ax + 7, "'15"], [ax + 90, "'16"], [ax + 173, "Feb"]].forEach(([x, v]) => {
    s += `<path d="M${x} 187v9" stroke="#444" stroke-width="2"/><text x="${x + 1}" y="225" text-anchor="middle">${v}</text>`;
  });
  return `<figure class="chart${line ? " alert" : ""}"><figcaption>${c.title}</figcaption><svg viewBox="0 0 292 236">${s}</svg></figure>`;
}).join("");
```
